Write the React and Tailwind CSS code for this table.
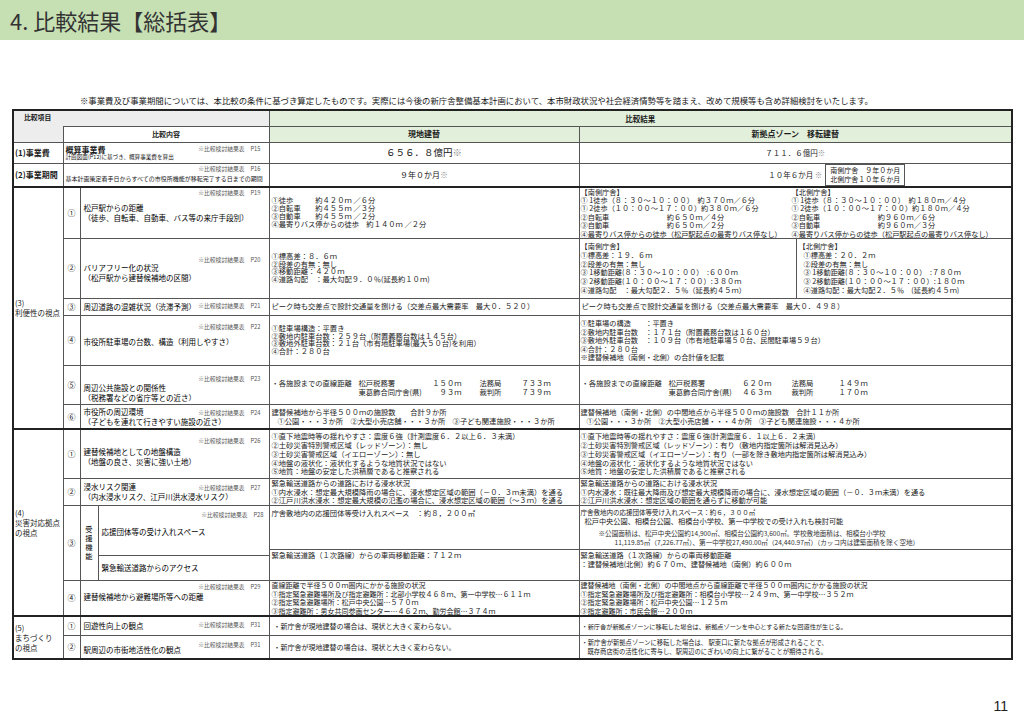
import React from "react";

const C = "border border-[#555] p-0";
const T = " border-t-2 border-t-[#222]";
const BODY = " text-[7.3px] leading-[7.9px] px-[2px] whitespace-nowrap";

function RefNote({ p }) {
  return (
    <span className="text-[5.8px] leading-[6px] text-[#555] whitespace-nowrap">
      ※比較検討結果表　{p}
    </span>
  );
}

function StackLabel({ p, pt, gap, lines }) {
  return (
    <div className={pt}>
      <div className="flex justify-end pr-[8px] h-[6px] items-center">
        <RefNote p={p} />
      </div>
      <div className={"pl-[3px] text-[7.5px] leading-[10px] text-black whitespace-nowrap " + gap}>
        {lines.map((l, i) => (
          <div key={i}>{l}</div>
        ))}
      </div>
    </div>
  );
}

function InlineLabel({ p, pt, rest = [], refPt = "" }) {
  return (
    <div className={"pl-[3px] pr-[8px] text-[7.5px] leading-[10px] text-black whitespace-nowrap " + pt}>
      <div className="flex justify-between items-center">
        <span>{rest[0]}</span>
        <span className={refPt}>
          <RefNote p={p} />
        </span>
      </div>
      {rest.slice(1).map((l, i) => (
        <div key={i}>{l}</div>
      ))}
    </div>
  );
}

function Lines({ lines }) {
  return lines.map((l, i) => <div key={i}>{l}</div>);
}

function Num({ n, top = "" }) {
  return <td className={C + top + " text-center text-[8px]"}>{n}</td>;
}

export default function App() {
  return (
    <div className="w-[1024px] h-[724px] bg-white font-['Noto_Sans_CJK_JP','Noto_Sans_CJK_SC',sans-serif] text-[#1a1a1a] overflow-hidden">
      <div className="h-[40px] bg-[#c6e0b4] flex items-center pl-[10px]">
        <h1 className="text-[22px] leading-none font-normal text-[#333]">4. 比較結果【総括表】</h1>
      </div>
      <p className="mt-[55px] pl-[80px] text-[8.4px] leading-[10px] whitespace-nowrap">
        ※事業費及び事業期間については、本比較の条件に基づき算定したものです。実際には今後の新庁舎整備基本計画において、本市財政状況や社会経済情勢等を踏まえ、改めて規模等も含め詳細検討をいたします。
      </p>
      <table className="mt-[4px] ml-[12px] w-[999px] table-fixed border-collapse border-2 border-[#222]">
        <colgroup>
          <col className="w-[50px]" />
          <col className="w-[17px]" />
          <col className="w-[18px]" />
          <col className="w-[171px]" />
          <col className="w-[310px]" />
          <col className="w-[217px]" />
          <col className="w-[216px]" />
        </colgroup>
        <tbody>
          <tr className="h-[16px]">
            <td colSpan={4} className={C + " bg-[#ededed] align-top pl-[10px] pt-[2px] text-[6.8px] leading-[9px] font-bold"}>
              比較項目
            </td>
            <td colSpan={3} className={C + " bg-[#e2efda] text-center text-[7.5px] font-bold"}>
              比較結果
            </td>
          </tr>
          <tr className="h-[16px]">
            <td className={C + " bg-[#ededed] [border-top-style:hidden]"}></td>
            <td colSpan={3} className={C + " text-center text-[7px] font-bold"}>
              比較内容
            </td>
            <td className={C + " bg-[#e2efda] text-center text-[8px] font-bold"}>現地建替</td>
            <td colSpan={2} className={C + " bg-[#e2efda] text-center text-[8px] font-bold"}>
              新拠点ゾーン　移転建替
            </td>
          </tr>
          <tr className="h-[21px]">
            <td className={C + " pl-[1px] text-[8px] font-bold whitespace-nowrap"}>(1)事業費</td>
            <td colSpan={3} className={C + " align-top"}>
              <div className="pl-[2px] pr-[8px] pt-[2px]">
                <div className="flex justify-between items-center">
                  <span className="text-[8px] leading-[9px] font-bold">概算事業費</span>
                  <RefNote p="P15" />
                </div>
                <div className="text-[5.6px] leading-[7px] whitespace-nowrap">計画図面(P12)に基づき、概算事業費を算出</div>
              </div>
            </td>
            <td className={C + " text-center text-[9.5px]"}>
              ６５６．８億円<span className="text-[#888]">※</span>
            </td>
            <td colSpan={2} className={C + " text-center text-[7.5px]"}>
              ７１１．６億円<span className="text-[#888]">※</span>
            </td>
          </tr>
          <tr className="h-[23px]">
            <td className={C + " pl-[1px] text-[8px] font-bold whitespace-nowrap"}>(2)事業期間</td>
            <td colSpan={3} className={C + " align-top"}>
              <div className="pl-[2px] pr-[8px] pt-[2px]">
                <div className="flex justify-end h-[6px] items-center">
                  <RefNote p="P16" />
                </div>
                <div className="mt-[3px] text-[6px] leading-[8px] whitespace-nowrap">
                  基本計画策定着手日からすべての市役所機能が移転完了する日までの期間
                </div>
              </div>
            </td>
            <td className={C + " text-center text-[8px]"}>
              ９年０か月<span className="text-[#888]">※</span>
            </td>
            <td colSpan={2} className={C}>
              <div className="grid grid-cols-[1fr_auto_1fr] items-center">
                <div></div>
                <div className="text-[7.5px] whitespace-nowrap">
                  １０年６か月 <span className="text-[#888]">※</span>
                </div>
                <div className="justify-self-start ml-[3px] border border-[#555] px-[4px] py-[1px] text-[7px] leading-[9px] whitespace-nowrap">
                  <div>南側庁舎　９年０か月</div>
                  <div>北側庁舎１０年６か月</div>
                </div>
              </div>
            </td>
          </tr>

          <tr className="h-[50px]">
            <td rowSpan={6} className={C + T + " pl-[1px] text-[7.5px] leading-[10px] whitespace-nowrap"}>
              <div>(3)</div>
              <div>利便性の視点</div>
            </td>
            <Num n="①" top={T} />
            <td colSpan={2} className={C + T + " align-top"}>
              <StackLabel p="P19" pt="pt-[2px]" gap="mt-[7px]" lines={["松戸駅からの距離", "（徒歩、自転車、自動車、バス等の来庁手段別）"]} />
            </td>
            <td className={C + T + BODY}>
              <Lines
                lines={[
                  "①徒歩　　　約４２０ｍ ／６分",
                  "②自転車　　約４５５ｍ ／３分",
                  "③自動車　　約４５５ｍ ／２分",
                  "④最寄りバス停からの徒歩　約１４０ｍ ／２分",
                ]}
              />
            </td>
            <td colSpan={2} className={C + T}>
              <div className="flex text-[7.2px] leading-[8.4px] whitespace-nowrap">
                <div className="w-[212px] pl-[1px]">
                  <Lines
                    lines={[
                      "【南側庁舎】",
                      "① 1徒歩（８：３０～１０：００）　約３７０ｍ／６分",
                      "① 2徒歩（１０：００～１７：００）約３８０ｍ／６分",
                      "②自転車　　　　　　　　約６５０ｍ／４分",
                      "③自動車　　　　　　　　約６５０ｍ／２分",
                      "④最寄りバス停からの徒歩（松戸駅起点の最寄りバス停なし）",
                    ]}
                  />
                </div>
                <div className="flex-1">
                  <Lines
                    lines={[
                      "【北側庁舎】",
                      "① 1徒歩（８：３０～１０：００）　約１８０ｍ／４分",
                      "① 2徒歩（１０：００～１７：００）約１８０ｍ／４分",
                      "②自転車　　　　　　　　約９６０ｍ／６分",
                      "③自動車　　　　　　　　約９６０ｍ／３分",
                      "④最寄りバス停からの徒歩（松戸駅起点の最寄りバス停なし）",
                    ]}
                  />
                </div>
              </div>
            </td>
          </tr>
          <tr className="h-[60px]">
            <Num n="②" />
            <td colSpan={2} className={C + " align-top"}>
              <StackLabel p="P20" pt="pt-[18px]" gap="mt-0" lines={["バリアフリー化の状況", "（松戸駅から建替候補地の区間）"]} />
            </td>
            <td className={C + BODY}>
              <Lines
                lines={[
                  "①標高差：８．６ｍ",
                  "②段差の有無：無し",
                  "③移動距離：４２０ｍ",
                  "④道路勾配　：最大勾配９．０％(延長約１０ｍ)",
                ]}
              />
            </td>
            <td className={C + " text-[7.2px] leading-[8.7px] pl-[1px] whitespace-nowrap"}>
              <Lines
                lines={[
                  "【南側庁舎】",
                  "①標高差：１９．６ｍ",
                  "②段差の有無：無し",
                  "③ 1移動距離(８：３０～１０：００）　:６００ｍ",
                  "③ 2移動距離(１０：００～１７：００）:３８０ｍ",
                  "④道路勾配　：最大勾配２．５％（延長約４５ｍ）",
                ]}
              />
            </td>
            <td className={C + " text-[7.2px] leading-[8.7px] pl-[2px] whitespace-nowrap"}>
              <div>【北側庁舎】</div>
              <div className="pl-[5px]">
                <Lines
                  lines={[
                    "①標高差：２０．２ｍ",
                    "②段差の有無：無し",
                    "③ 1移動距離(８：３０～１０：００）　:７８０ｍ",
                    "③ 2移動距離(１０：００～１７：００）:１８０ｍ",
                    "④道路勾配：最大勾配２．５％　(延長約４５ｍ)",
                  ]}
                />
              </div>
            </td>
          </tr>
          <tr className="h-[17px]">
            <Num n="③" />
            <td colSpan={2} className={C}>
              <InlineLabel p="P21" pt="" refPt="-mt-[4px]" rest={["周辺道路の混雑状況（渋滞予測）"]} />
            </td>
            <td className={C + BODY}>ピーク時も交差点で設計交通量を捌ける（交差点最大需要率　最大０．５２０）</td>
            <td colSpan={2} className={C + BODY}>ピーク時も交差点で設計交通量を捌ける（交差点最大需要率　最大０．４９８）</td>
          </tr>
          <tr className="h-[50px]">
            <Num n="④" />
            <td colSpan={2} className={C + " align-top"}>
              <StackLabel p="P22" pt="pt-[8px]" gap="mt-[7px]" lines={["市役所駐車場の台数、構造（利用しやすさ）"]} />
            </td>
            <td className={C + BODY}>
              <Lines
                lines={[
                  "①駐車場構造：平置き",
                  "②敷地内駐車台数：２５９台（附置義務台数は１４５台）",
                  "③敷地外駐車台数：２１台（市有地駐車場(最大５０台)を利用）",
                  "④合計：２８０台",
                ]}
              />
            </td>
            <td colSpan={2} className={C + " text-[7.2px] leading-[8.4px] px-[1px] whitespace-nowrap"}>
              <Lines
                lines={[
                  "①駐車場の構造　　：平置き",
                  "②敷地内駐車台数　：１７１台（附置義務台数は１６０台）",
                  "③敷地外駐車台数　：１０９台（市有地駐車場５０台、民間駐車場５９台）",
                  "④合計：２８０台",
                  "※建替候補地（南側・北側）の合計値を記載",
                ]}
              />
            </td>
          </tr>
          <tr className="h-[39px]">
            <Num n="⑤" />
            <td colSpan={2} className={C + " align-top"}>
              <StackLabel p="P23" pt="pt-[10px]" gap="mt-[1px]" lines={["周辺公共施設との関係性", "（税務署などの省庁等との近さ）"]} />
            </td>
            <td className={C}>
              <div className="pl-[2px] pt-[6px] text-[7.3px] leading-[9px] whitespace-nowrap grid grid-cols-[87px_70px_33px_18px_42px_auto]">
                <div>・各施設までの直線距離</div>
                <div>松戸税務署</div>
                <div className="text-right">１５０ｍ</div>
                <div></div>
                <div>法務局</div>
                <div>７３３ｍ</div>
                <div></div>
                <div>東葛飾合同庁舎(県)</div>
                <div className="text-right">９３ｍ</div>
                <div></div>
                <div>裁判所</div>
                <div>７３９ｍ</div>
              </div>
            </td>
            <td colSpan={2} className={C}>
              <div className="pl-[2px] pt-[6px] text-[7.3px] leading-[9px] whitespace-nowrap grid grid-cols-[87px_70px_33px_20px_47px_auto]">
                <div>・各施設までの直線距離</div>
                <div>松戸税務署</div>
                <div className="text-right">６２０ｍ</div>
                <div></div>
                <div>法務局</div>
                <div>１４９ｍ</div>
                <div></div>
                <div>東葛飾合同庁舎(県)</div>
                <div className="text-right">４６３ｍ</div>
                <div></div>
                <div>裁判所</div>
                <div>１７０ｍ</div>
              </div>
            </td>
          </tr>
          <tr className="h-[25px]">
            <Num n="⑥" />
            <td colSpan={2} className={C}>
              <InlineLabel p="P24" pt="" rest={["市役所の周辺環境", "（子どもを連れて行きやすい施設の近さ）"]} />
            </td>
            <td className={C + " text-[7.3px] leading-[8.8px] px-[2px] whitespace-nowrap"}>
              <div>建替候補地から半径５００ｍの施設数　　合計９か所</div>
              <div className="pl-[6px]">①公園・・・３か所　②大型小売店舗・・・３か所　③子ども関連施設・・・３か所</div>
            </td>
            <td colSpan={2} className={C + " text-[7.2px] leading-[8.8px] px-[1px] whitespace-nowrap"}>
              <div>建替候補地（南側・北側）の中間地点から半径５００ｍの施設数　合計１１か所</div>
              <div className="pl-[6px]">①公園・・・３か所　②大型小売店舗・・・４か所　③子ども関連施設・・・４か所</div>
            </td>
          </tr>

          <tr className="h-[49px]">
            <td rowSpan={4} className={C + T + " pl-[1px] text-[7.5px] leading-[10px] whitespace-nowrap"}>
              <div>(4)</div>
              <div>災害対応拠点</div>
              <div>の視点</div>
            </td>
            <Num n="①" top={T} />
            <td colSpan={2} className={C + T + " align-top"}>
              <StackLabel p="P26" pt="pt-[8px]" gap="mt-[3px]" lines={["建替候補地としての地盤構造", "（地盤の良さ、災害に強い土地）"]} />
            </td>
            <td className={C + T + " text-[7.3px] leading-[8.8px] px-[2px] whitespace-nowrap"}>
              <Lines
                lines={[
                  "①直下地震時等の揺れやすさ：震度６強（計測震度６．２以上６．３未満）",
                  "②土砂災害特別警戒区域（レッドゾーン）：無し",
                  "③土砂災害警戒区域（イエローゾーン）：無し",
                  "④地盤の液状化：液状化するような地質状況ではない",
                  "⑤地質：地盤の安定した洪積層であると推察される",
                ]}
              />
            </td>
            <td colSpan={2} className={C + T + " text-[7.2px] leading-[8.8px] px-[1px] whitespace-nowrap"}>
              <Lines
                lines={[
                  "①直下地震時等の揺れやすさ：震度６強(計測震度６．１以上６．２未満)",
                  "②土砂災害特別警戒区域（レッドゾーン）：有り（敷地内指定箇所は解消見込み）",
                  "③土砂災害警戒区域（イエローゾーン）：有り（一部を除き敷地内指定箇所は解消見込み）",
                  "④地盤の液状化：液状化するような地質状況ではない",
                  "⑤地質：地盤の安定した洪積層であると推察される",
                ]}
              />
            </td>
          </tr>
          <tr className="h-[27px]">
            <Num n="②" />
            <td colSpan={2} className={C}>
              <InlineLabel p="P27" pt="" rest={["浸水リスク関連", "（内水浸水リスク、江戸川洪水浸水リスク）"]} />
            </td>
            <td className={C + " text-[7.3px] leading-[8.6px] px-[2px] whitespace-nowrap"}>
              <Lines
                lines={[
                  "緊急輸送道路からの道路における浸水状況",
                  "①内水浸水：想定最大規模降雨の場合に、浸水想定区域の範囲（－０．３ｍ未満）を通る",
                  "②江戸川洪水浸水：想定最大規模の氾濫の場合に、浸水想定区域の範囲（～３ｍ）を通る",
                ]}
              />
            </td>
            <td colSpan={2} className={C + " text-[7.2px] leading-[8.6px] px-[1px] whitespace-nowrap"}>
              <Lines
                lines={[
                  "緊急輸送道路からの道路における浸水状況",
                  "①内水浸水：既往最大降雨及び想定最大規模降雨の場合に、浸水想定区域の範囲（－０．３ｍ未満）を通る",
                  "②江戸川洪水浸水：想定区域の範囲を通らずに移動が可能",
                ]}
              />
            </td>
          </tr>
          <tr className="h-[74px]">
            <Num n="③" />
            <td className={C}>
              <div className="flex flex-col items-center text-[7.3px] leading-[9px] text-black">
                <div>受</div>
                <div>援</div>
                <div>機</div>
                <div>能</div>
              </div>
            </td>
            <td className={C + " align-top"}>
              <div className="flex flex-col h-[74px]">
                <div className="h-[50px] border-b border-[#555]">
                  <div className="pt-[6px]">
                    <div className="flex justify-end pr-[5px] h-[6px] items-center">
                      <RefNote p="P28" />
                    </div>
                    <div className="mt-[9px] pl-[3px] text-[7.5px] leading-[10px] text-black whitespace-nowrap">応援団体等の受け入れスペース</div>
                  </div>
                </div>
                <div className="flex-1 flex items-center pl-[3px] text-[7.5px] leading-[10px] text-black whitespace-nowrap">
                  緊急輸送道路からのアクセス
                </div>
              </div>
            </td>
            <td className={C + " align-top"}>
              <div className="flex flex-col h-[74px] text-[7.3px] leading-[8.6px] whitespace-nowrap">
                <div className="h-[44px] border-b border-[#555] px-[2px] pt-[3px]">
                  庁舎敷地内の応援団体等受け入れスペース　：約８，２００㎡
                </div>
                <div className="flex-1 px-[2px] pt-[1px]">緊急輸送道路（１次路線）からの車両移動距離：７１２ｍ</div>
              </div>
            </td>
            <td colSpan={2} className={C + " align-top"}>
              <div className="flex flex-col h-[74px] whitespace-nowrap">
                <div className="h-[44px] border-b border-[#555] px-[1px] pt-[2px]">
                  <div className="text-[6.5px] leading-[8.6px]">庁舎敷地内の応援団体等受け入れスペース：約６，３００㎡</div>
                  <div className="text-[7.2px] leading-[8.6px] pl-[4px]">松戸中央公園、相模台公園、相模台小学校、第一中学校での受け入れも検討可能</div>
                  <div className="mt-[4px] text-[6.6px] leading-[8.4px] text-[#333]">
                    <div className="pl-[18px]">※公園面積は、松戸中央公園約14,900㎡、相模台公園約3,600㎡。学校敷地面積は、相模台小学校</div>
                    <div className="pl-[34px]">11,119.85㎡（7,226.77㎡）、第一中学校27,490.00㎡（24,440.97㎡）（カッコ内は建築面積を除く空地）</div>
                  </div>
                </div>
                <div className="flex-1 px-[1px] pt-[1px] text-[7.2px] leading-[8.8px]">
                  <div>緊急輸送道路（１次路線）からの車両移動距離</div>
                  <div>：建替候補地(北側）約６７０ｍ、建替候補地（南側）約６００ｍ</div>
                </div>
              </div>
            </td>
          </tr>
          <tr className="h-[36px]">
            <Num n="④" />
            <td colSpan={2} className={C + " align-top"}>
              <StackLabel p="P29" pt="pt-[3px]" gap="mt-[2px]" lines={["建替候補地から避難場所等への距離"]} />
            </td>
            <td className={C + " text-[7px] leading-[8.4px] px-[2px] whitespace-nowrap"}>
              <Lines
                lines={[
                  "直線距離で半径５００ｍ圏内にかかる施設の状況",
                  "①指定緊急避難場所及び指定避難所：北部小学校４６８ｍ、第一中学校…６１１ｍ",
                  "②指定緊急避難場所：松戸中央公園…５７０ｍ",
                  "③指定避難所：男女共同参画センター…４６２ｍ、勤労会館…３７４ｍ",
                ]}
              />
            </td>
            <td colSpan={2} className={C + " text-[7px] leading-[8.4px] px-[1px] whitespace-nowrap"}>
              <Lines
                lines={[
                  "建替候補地（南側・北側）の中間地点から直線距離で半径５００ｍ圏内にかかる施設の状況",
                  "①指定緊急避難場所及び指定避難所：相模台小学校…２４９ｍ、第一中学校…３５２ｍ",
                  "②指定緊急避難場所：松戸中央公園…１２５ｍ",
                  "③指定避難所：市民会館…２００ｍ",
                ]}
              />
            </td>
          </tr>

          <tr className="h-[19px]">
            <td rowSpan={2} className={C + T + " pl-[1px] text-[7.5px] leading-[10px] whitespace-nowrap"}>
              <div>(5)</div>
              <div>まちづくり</div>
              <div>の視点</div>
            </td>
            <Num n="①" top={T} />
            <td colSpan={2} className={C + T}>
              <InlineLabel p="P31" pt="" refPt="-mt-[4px]" rest={["回遊性向上の観点"]} />
            </td>
            <td className={C + T + " text-[7px] px-[4px] whitespace-nowrap"}>・新庁舎が現地建替の場合は、現状と大きく変わらない。</td>
            <td colSpan={2} className={C + T + " text-[6.2px] px-[2px] whitespace-nowrap"}>
              ・新庁舎が新拠点ゾーンに移転した場合は、新拠点ゾーンを中心とする新たな回遊性が生じる。
            </td>
          </tr>
          <tr className="h-[24px]">
            <Num n="②" />
            <td colSpan={2} className={C + " align-top"}>
              <InlineLabel p="P31" pt="pt-[9px]" refPt="-mt-[12px]" rest={["駅周辺の市街地活性化の観点"]} />
            </td>
            <td className={C + " text-[7px] px-[4px] whitespace-nowrap"}>・新庁舎が現地建替の場合は、現状と大きく変わらない。</td>
            <td colSpan={2} className={C + " text-[6.3px] leading-[9px] px-[2px] whitespace-nowrap"}>
              <div>・新庁舎が新拠点ゾーンに移転した場合は、 駅東口に新たな拠点が形成されることで、</div>
              <div className="pl-[6px]">既存商店街の活性化に寄与し、駅周辺のにぎわいの向上に繋がることが期待される。</div>
            </td>
          </tr>
        </tbody>
      </table>
      <div className="mt-[38px] pr-[16px] text-right text-[14px] leading-[16px] font-['Liberation_Sans',sans-serif] text-[#222]">
        11
      </div>
    </div>
  );
}
